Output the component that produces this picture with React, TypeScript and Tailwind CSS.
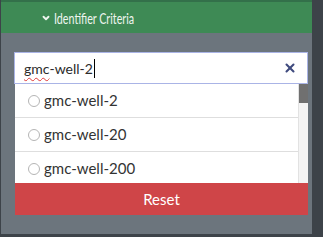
import { ChevronDown, X } from 'lucide-react';

const options = ['gmc-well-2', 'gmc-well-20', 'gmc-well-200'];

function Radio() {
  return <span className="inline-block h-[12px] w-[12px] shrink-0 rounded-full border border-[#b5b5b5] bg-white" />;
}

export default function App() {
  return (
    <div className="flex h-[237px] w-[323px] overflow-hidden bg-[#3d4349] font-['Lato',sans-serif]">
      <div className="flex h-[234px] w-[312px] flex-col border-l border-[#3d4349] bg-[#6c757d]">
        <div className="flex h-[33px] items-center border-t-2 border-[#33704a] bg-[#3e8a55] pl-[40px] text-[16px] text-[#eef5ef]">
          <ChevronDown className="mr-[3px] h-[10px] w-[10px]" strokeWidth={4.5} />
          <span className="inline-block origin-left scale-x-[0.67] whitespace-nowrap">Identifier Criteria</span>
        </div>
        <div className="flex flex-1 flex-col pl-[13px] pr-[4px] pt-[19px]">
          <div className="flex h-[32px] items-center justify-between border border-[#aab4e6] bg-white pl-[9px] pr-[10px]">
            <div className="flex items-center text-[14px] text-[#2b2b2b]">
              <span className="underline decoration-wavy decoration-[#e03b3b] decoration-1 underline-offset-[3px]">gmc</span>
              <span>-well-2</span>
              <span className="ml-px h-[19px] w-px bg-black" />
            </div>
            <X className="h-[14px] w-[14px] text-[#3f4a7e]" strokeWidth={3.5} />
          </div>
          <div className="ml-px flex h-[99px] overflow-hidden bg-white">
            <div className="flex flex-1 flex-col">
              {options.map((o) => (
                <div key={o} className="flex h-[34px] shrink-0 items-center gap-[4px] border-b border-[#dedede] pl-[13px] text-[15px] text-[#333]">
                  <Radio />
                  <span>{o}</span>
                </div>
              ))}
            </div>
            <div className="w-[10px] border-l border-[#e2e2e2] bg-[#f4f4f4]">
              <div className="h-[19px] bg-[#707070]" />
            </div>
          </div>
          <button className="ml-px flex h-[32px] items-center justify-center bg-[#cf4548] text-[15px] text-white">
            Reset
          </button>
        </div>
      </div>
    </div>
  );
}
